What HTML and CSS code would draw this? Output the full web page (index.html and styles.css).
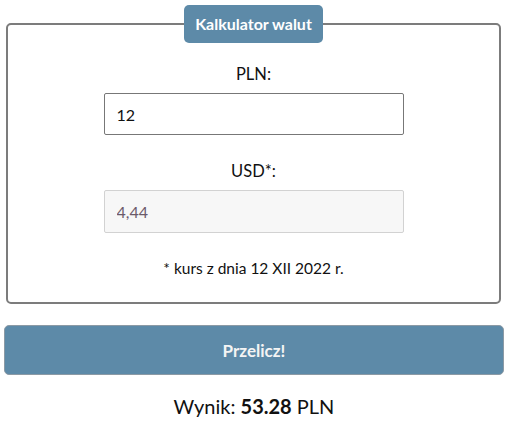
FILE: index.html
```html
<!DOCTYPE html>
<html lang="pl">
<head>
<meta charset="utf-8">
<title>Kalkulator walut</title>
<link rel="stylesheet" href="styles.css">
</head>
<body>
<div class="wrap">
  <fieldset class="calc">
    <legend class="calc-title">Kalkulator walut</legend>
    <label class="field-label" for="pln">PLN:</label>
    <input class="field-input" id="pln" type="text" value="12">
    <label class="field-label" for="usd">USD*:</label>
    <input class="field-input field-readonly" id="usd" type="text" value="4,44" readonly>
    <p class="note">* kurs z dnia 12 XII 2022 r.</p>
  </fieldset>
  <button class="btn" type="button">Przelicz!</button>
  <p class="result">Wynik: <strong>53.28</strong> PLN</p>
</div>
</body>
</html>
```
FILE: styles.css
```css
html, body {
  margin: 0;
  padding: 0;
  background: #fff;
}
body {
  font-family: Lato, "Open Sans", sans-serif;
  color: #111;
}
.wrap {
  width: 500px;
  margin: 5px 0 0 4px;
  display: flex;
  flex-direction: column;
}
.calc {
  margin: 0 3px 0 2px;
  border: 2px solid #7c7c7c;
  border-radius: 5px;
  padding: 0 0 24px;
  display: flex;
  flex-direction: column;
  align-items: center;
}
.calc-title {
  margin: 0 auto;
  background: #5d8aa8;
  color: #fff;
  font-weight: 700;
  font-size: 16px;
  line-height: 38px;
  padding: 0 11px;
  border-radius: 5px;
}
.field-label {
  font-size: 16.5px;
  line-height: 20px;
  margin-top: 21px;
  margin-bottom: 9px;
}
.field-input {
  box-sizing: border-box;
  width: 300px;
  height: 42px;
  border: 1px solid #777;
  border-radius: 2px;
  padding: 0 12px;
  font-family: Lato, sans-serif;
  font-size: 16px;
  color: #111;
  background: #fff;
  outline: none;
}
.field-readonly {
  height: 43px;
  background: #f7f7f7;
  border-color: #d2d2d2;
  color: #6b5a6a;
}
.field-input + .field-label {
  margin-top: 26px;
}
.note {
  font-size: 15.5px;
  line-height: 19px;
  margin: 26px 0 0;
}
.btn {
  margin-top: 21px;
  height: 50px;
  width: 500px;
  background: #5d8aa8;
  color: #f4f4f4;
  border: 1px solid #8c9aa5;
  border-radius: 5px;
  font-family: Lato, sans-serif;
  font-weight: 700;
  font-size: 17px;
}
.result {
  text-align: center;
  font-size: 20px;
  margin: 19px 0 0;
  line-height: 24px;
}
.result strong {
  font-weight: 700;
}
```
